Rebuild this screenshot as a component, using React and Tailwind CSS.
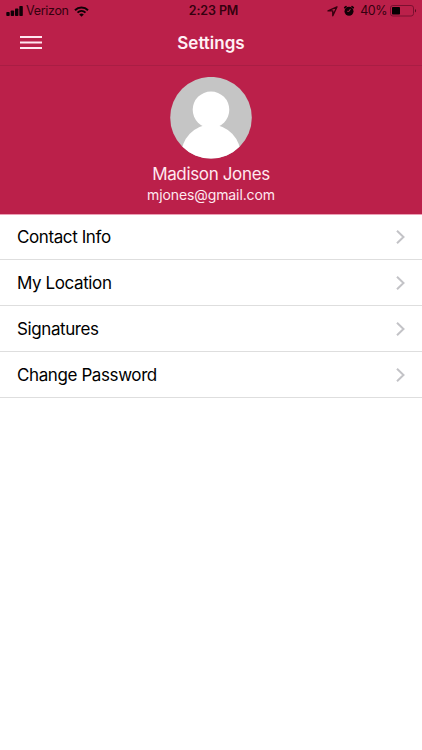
import React from 'react';

const menuItems = ['Contact Info', 'My Location', 'Signatures', 'Change Password'];

function StatusBar() {
  return (
    <div className="grid grid-cols-3 items-center h-[22px] pl-[6px] pr-[5px] text-[#35000f]">
      <div className="flex items-center">
        <svg width="17" height="10" viewBox="0 0 17 10" fill="#100006">
          <rect x="0.3" y="6" width="3.4" height="4" rx="0.8" />
          <rect x="4.7" y="4.5" width="3.4" height="5.5" rx="0.8" />
          <rect x="9" y="2.5" width="3.4" height="7.5" rx="0.8" />
          <rect x="13.3" y="0" width="3.5" height="10" rx="0.8" />
        </svg>
        <span className="ml-[3px] w-[42px] text-[12.5px] leading-[22px] tracking-[-0.3px]">Verizon</span>
        <svg className="ml-[6px]" width="15" height="11" viewBox="0 0 15 11" fill="none" stroke="#100006">
          <path d="M1 4.2C4.6 0.6 10.4 0.6 14 4.2" strokeWidth="2" />
          <path d="M3.5 6.7C5.8 4.4 9.2 4.4 11.5 6.7" strokeWidth="1.9" />
          <path d="M7.5 10.8L5.2 8.5C6.5 7.3 8.5 7.3 9.8 8.5Z" fill="#100006" stroke="none" />
        </svg>
      </div>
      <div className="pl-[4px] text-center text-[12.5px] font-semibold leading-[22px] tracking-[-0.1px]">2:23 PM</div>
      <div className="flex items-center justify-end">
        <svg width="11" height="11" viewBox="0 0 11 11" fill="none" stroke="currentColor" strokeWidth="1.4" strokeLinejoin="round">
          <path d="M10 0.8L1 4.9H5.8V9.8Z" />
        </svg>
        <svg className="ml-[5px]" width="12" height="12" viewBox="0 0 12 12">
          <circle cx="6" cy="6.2" r="4.5" fill="#100006" />
          <path d="M1.7 2.7L3 1.6M9 1.6L10.3 2.7" stroke="#100006" strokeWidth="1.6" strokeLinecap="round" />
          <path d="M7.4 3.9L6.2 6.3H4.2" fill="none" stroke="#bb204a" strokeWidth="0.9" />
        </svg>
        <span className="ml-[5px] text-[12.5px] leading-[22px] tracking-[-0.5px]">40%</span>
        <svg className="ml-[3px]" width="27" height="12" viewBox="0 0 27 12">
          <rect x="0.5" y="0.5" width="23" height="10.5" rx="2.4" fill="none" stroke="#7b1030" />
          <rect x="2" y="2" width="8" height="7.5" rx="0.8" fill="#050002" />
          <path d="M25 4V7.6C26.4 7 26.4 4.6 25 4Z" fill="#5a0a22" />
        </svg>
      </div>
    </div>
  );
}

function Avatar() {
  return (
    <svg className="mx-auto block" width="82" height="82" viewBox="0 0 82 82">
      <defs>
        <clipPath id="avatar">
          <circle cx="41" cy="40.7" r="40.8" />
        </clipPath>
      </defs>
      <g clipPath="url(#avatar)">
        <rect width="82" height="82" fill="#c5c5c5" />
        <circle cx="41" cy="32.8" r="18.3" fill="#fff" />
        <ellipse cx="41" cy="79" rx="30" ry="31.5" fill="#fff" />
      </g>
    </svg>
  );
}

function MenuRow({ label }) {
  return (
    <li className="border-b border-[#dedede]">
      <button type="button" className="flex h-[45px] w-full items-center justify-between pl-[17px] pr-[16px] text-[17px] tracking-[-0.4px] text-black">
        <span className="pt-[2px]">{label}</span>
        <svg width="11" height="16" viewBox="0 0 11 16" fill="none" stroke="#c3c3c7" strokeWidth="2">
          <path d="M2 1.7L8.5 8L2 14.3" />
        </svg>
      </button>
    </li>
  );
}

export default function App() {
  return (
    <div className="h-[750px] w-full overflow-hidden bg-white font-['Inter','Liberation_Sans',sans-serif]">
      <header className="h-[215px] border-b border-[#ec9fb5] bg-[#bb204a] text-white">
        <StatusBar />
        <div className="grid h-[44px] grid-cols-3 items-center border-b border-[#a91d44] px-[20px]">
          <button type="button" aria-label="Menu" className="w-[22px]">
            <svg className="block -mt-[2px]" width="22" height="13" viewBox="0 0 22 13" fill="#ffe6f0">
              <rect width="22" height="2" />
              <rect y="5.5" width="22" height="2" />
              <rect y="11" width="22" height="2" />
            </svg>
          </button>
          <h1 className="text-center text-[17px] font-semibold text-[#fff0f5]">Settings</h1>
        </div>
        <div className="pt-[11px] text-center text-[#ffe9f0]">
          <Avatar />
          <p className="mt-[4px] text-[17px] leading-[22px] tracking-[-0.35px]">Madison Jones</p>
          <p className="text-[14px] leading-[20px] tracking-[-0.1px]">mjones@gmail.com</p>
        </div>
      </header>
      <ul className="-mt-px">
        {menuItems.map(label => (
          <MenuRow key={label} label={label} />
        ))}
      </ul>
    </div>
  );
}
